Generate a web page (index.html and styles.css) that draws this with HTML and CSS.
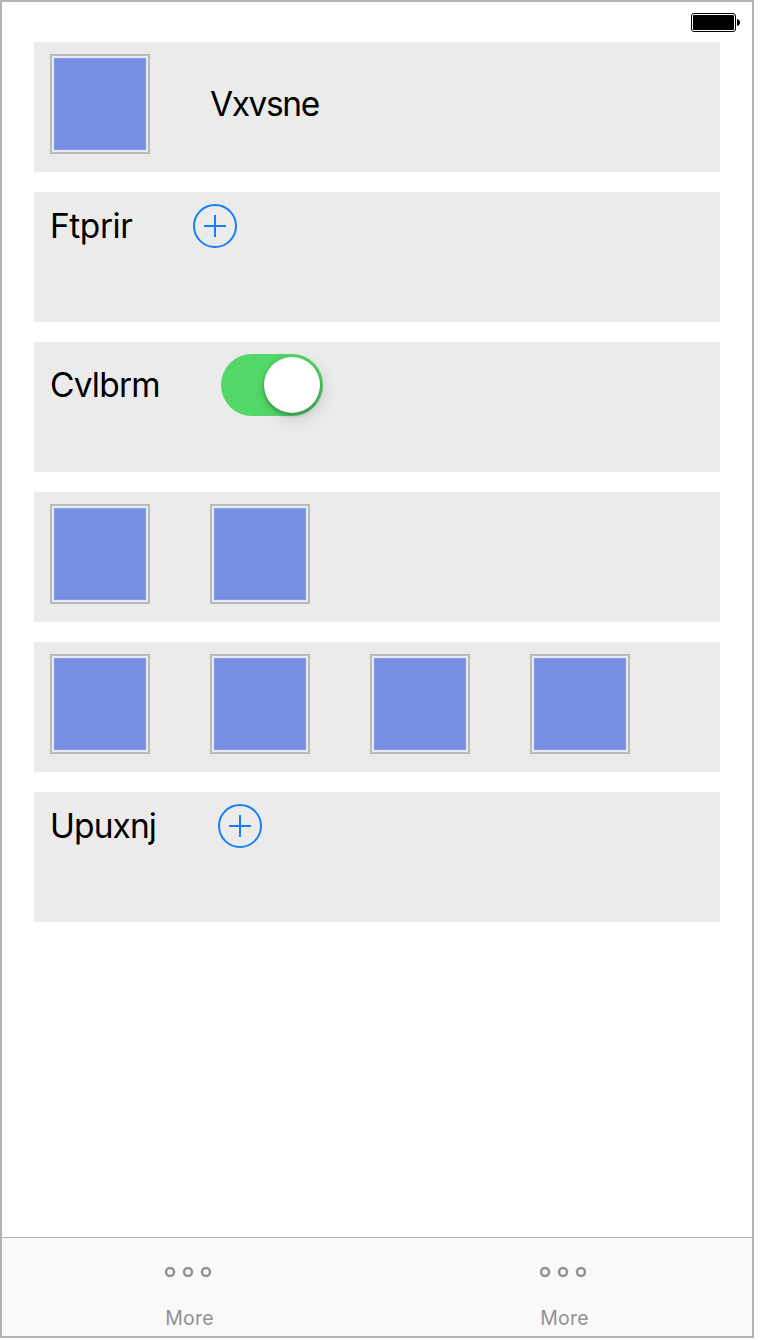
FILE: index.html
```html
<!DOCTYPE html>
<html lang="en">
<head>
<meta charset="utf-8">
<title>Stacks</title>
<link rel="stylesheet" href="styles.css">
</head>
<body>
<div class="screen">
  <header class="status">
    <svg class="battery" width="50" height="20" viewBox="0 0 50 20">
      <rect x=".5" y=".5" width="44" height="18" rx="2.5" fill="#fff" stroke="#000"/>
      <rect x="2" y="2" width="41" height="15" rx="1" fill="#000"/>
      <path d="M46 6c4 .5 4 6.500 0 7z" fill="#000"/>
    </svg>
  </header>
  <main class="rows">
    <section class="row"><div class="items"><div class="tile"></div><span class="label vx">Vxvsne</span></div></section>
    <section class="row"><div class="items"><span class="label ft">Ftprir</span>
      <svg class="add" width="44" height="44" viewBox="0 0 44 44"><circle cx="22" cy="22" r="21"/><path d="M11 22h22M22 11v22"/></svg></div></section>
    <section class="row"><div class="items"><span class="label cv">Cvlbrm</span><div class="switch"><div class="knob"></div></div></div></section>
    <section class="row"><div class="items"><div class="tile"></div><div class="tile"></div></div></section>
    <section class="row"><div class="items"><div class="tile"></div><div class="tile"></div><div class="tile"></div><div class="tile"></div></div></section>
    <section class="row"><div class="items"><span class="label up">Upuxnj</span>
      <svg class="add" width="44" height="44" viewBox="0 0 44 44"><circle cx="22" cy="22" r="21"/><path d="M11 22h22M22 11v22"/></svg></div></section>
  </main>
  <nav class="tabs">
    <div class="tab">
      <svg class="dots" width="46" height="10" viewBox="0 0 46 10"><circle cx="5" cy="5" r="4"/><circle cx="23" cy="5" r="4"/><circle cx="41" cy="5" r="4"/></svg>
      <span class="tab-name">More</span>
    </div>
    <div class="tab">
      <svg class="dots" width="46" height="10" viewBox="0 0 46 10"><circle cx="5" cy="5" r="4"/><circle cx="23" cy="5" r="4"/><circle cx="41" cy="5" r="4"/></svg>
      <span class="tab-name">More</span>
    </div>
  </nav>
</div>
</body>
</html>
```
FILE: styles.css
```css
* { box-sizing: border-box; }
body { margin: 0; background: #fff; font-family: Inter, "Liberation Sans", sans-serif; }
svg { display: block; flex: none; }
.screen { width: 754px; height: 1338px; border: 2px solid #b3b3b3; display: flex; flex-direction: column; }
.status { height: 40px; padding: 11px 11px 0 0; display: flex; justify-content: flex-end; align-items: flex-start; flex: none; }
.rows { flex: 1; padding: 0 32px; display: flex; flex-direction: column; gap: 20px; }
.row { height: 130px; padding: 12px 16px; background: #ebebeb; }
.items { display: flex; align-items: center; gap: 60px; }
.tile { width: 100px; height: 100px; flex: none; border: 2px solid #b9b9b9; background: #768fe2; box-shadow: inset 0 0 0 1px #edeef2, inset 0 0 0 2px #e1e7fb, inset 0 0 0 3px #859be5; }
.label { font-size: 33.5px; line-height: 40px; color: #000; white-space: nowrap; flex: none; }
.vx { width: 111px; letter-spacing: -1.4px; }
.ft { width: 83px; letter-spacing: -.45px; }
.cv { width: 111px; letter-spacing: -.8px; }
.up { width: 108px; letter-spacing: -.9px; }
.add { fill: none; stroke: #157efb; stroke-width: 2; }
.switch { width: 102px; height: 62px; padding: 3px; border-radius: 31px; background: #53d769; display: flex; justify-content: flex-end; }
.knob { width: 56px; height: 56px; border-radius: 50%; background: #fff; box-shadow: 0 2px 4px rgba(0,0,0,.32), 4px 6px 16px rgba(0,0,0,.12); }
.tabs { height: 99px; flex: none; display: flex; border-top: 1px solid #b2b2b2; background: #f9f9f9; }
.tab { flex: 1; padding-top: 29px; display: flex; flex-direction: column; align-items: center; gap: 29px; }
.dots { margin-right: 4px; fill: none; stroke: #929292; stroke-width: 2.500; }
.tab-name { font-size: 19.5px; line-height: 24px; color: #929292; letter-spacing: .2px; }
```
